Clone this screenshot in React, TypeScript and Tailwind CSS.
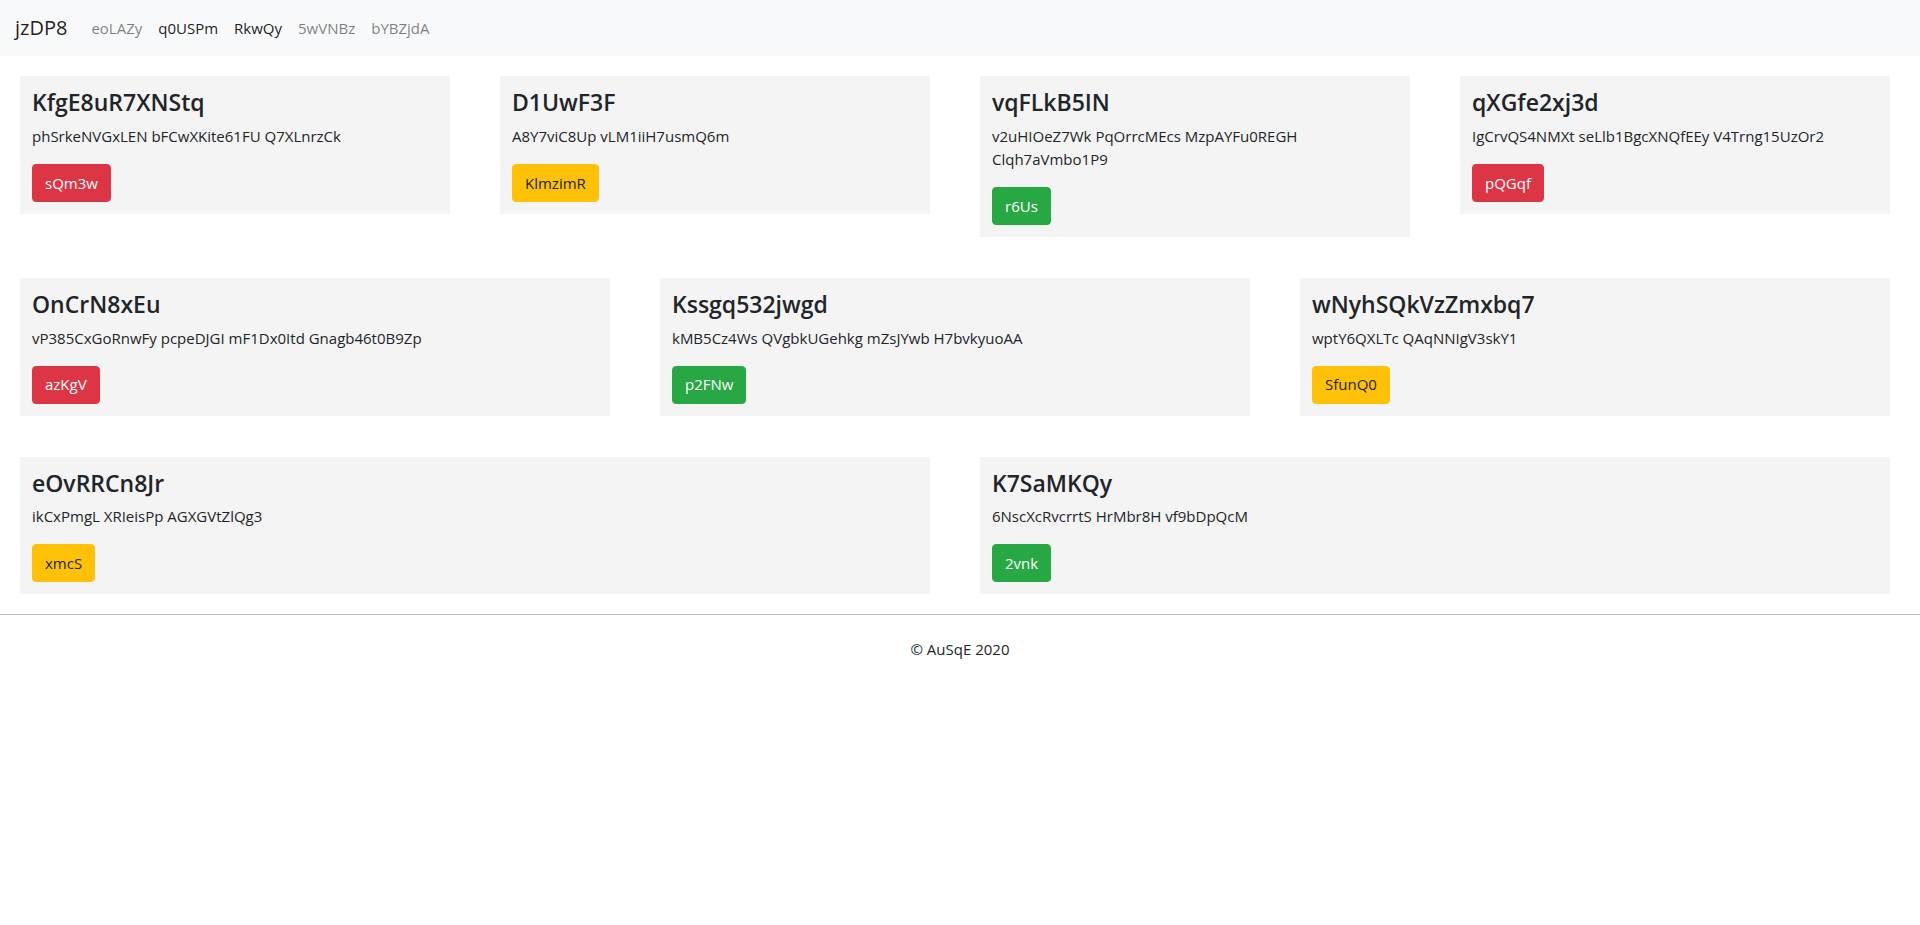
import React from 'react';

type Variant = 'danger' | 'warning' | 'success';

interface Card {
  title: string;
  text: React.ReactNode;
  button: string;
  variant: Variant;
}

const btnClass: Record<Variant, string> = {
  danger: 'bg-[#dc3545] border-[#dc3545] text-white',
  warning: 'bg-[#ffc107] border-[#ffc107] text-[#212529]',
  success: 'bg-[#28a745] border-[#28a745] text-white',
};

const rows: { cols: string; cards: Card[] }[] = [
  {
    cols: 'grid-cols-4',
    cards: [
      { title: 'KfgE8uR7XNStq', text: 'phSrkeNVGxLEN bFCwXKite61FU Q7XLnrzCk', button: 'sQm3w', variant: 'danger' },
      { title: 'D1UwF3F', text: 'A8Y7viC8Up vLM1iiH7usmQ6m', button: 'KlmzimR', variant: 'warning' },
      { title: 'vqFLkB5IN', text: 'v2uHIOeZ7Wk PqOrrcMEcs MzpAYFu0REGH Clqh7aVmbo1P9', button: 'r6Us', variant: 'success' },
      { title: 'qXGfe2xj3d', text: 'IgCrvQS4NMXt seLlb1BgcXNQfEEy V4Trng15UzOr2', button: 'pQGqf', variant: 'danger' },
    ],
  },
  {
    cols: 'grid-cols-3',
    cards: [
      { title: 'OnCrN8xEu', text: 'vP385CxGoRnwFy pcpeDJGI mF1Dx0Itd Gnagb46t0B9Zp', button: 'azKgV', variant: 'danger' },
      { title: 'Kssgq532jwgd', text: 'kMB5Cz4Ws QVgbkUGehkg mZsJYwb H7bvkyuoAA', button: 'p2FNw', variant: 'success' },
      { title: 'wNyhSQkVzZmxbq7', text: 'wptY6QXLTc QAqNNIgV3skY1', button: 'SfunQ0', variant: 'warning' },
    ],
  },
  {
    cols: 'grid-cols-2',
    cards: [
      { title: 'eOvRRCn8Jr', text: 'ikCxPmgL XRIeisPp AGXGVtZlQg3', button: 'xmcS', variant: 'warning' },
      { title: 'K7SaMKQy', text: '6NscXcRvcrrtS HrMbr8H vf9bDpQcM', button: '2vnk', variant: 'success' },
    ],
  },
];

const navLinks = [
  { label: 'eoLAZy', active: false },
  { label: 'q0USPm', active: true },
  { label: 'RkwQy', active: true },
  { label: '5wVNBz', active: false },
  { label: 'bYBZjdA', active: false },
];

const CardBox: React.FC<{ card: Card }> = ({ card }) => (
  <div className="bg-[#f4f4f4] p-3">
    <h3 className="text-[23px] leading-[28.8px] font-semibold mb-2 text-[#212529]">{card.title}</h3>
    <p className="text-[15px] leading-[23px] mb-4 text-[#212529]">{card.text}</p>
    <button
      className={`${btnClass[card.variant]} border rounded-[4px] px-3 h-[38px] text-[15px] leading-[1.5]`}
    >
      {card.button}
    </button>
  </div>
);

export default function App() {
  return (
    <div className="min-h-screen bg-white text-[#212529]" style={{ fontFamily: '"Segoe UI", "Open Sans", sans-serif' }}>
      <nav className="bg-[#f8f9fa] h-[56px] flex items-center px-[15px]">
        <a className="text-[20px] leading-[30px] mr-4 text-black/90">jzDP8</a>
        <div className="flex">
          {navLinks.map((l) => (
            <a key={l.label} className={`px-2 text-[15px] leading-6 ${l.active ? 'text-black/90' : 'text-black/50'}`}>
              {l.label}
            </a>
          ))}
        </div>
      </nav>

      <main className="pl-[20px] pr-[30px] pt-[20px]">
        {rows.map((row, i) => (
          <div key={i} className={`grid ${row.cols} gap-x-[50px] items-start ${i === rows.length - 1 ? 'mb-[20px]' : 'mb-[41px]'}`}>
            {row.cards.map((c) => (
              <CardBox key={c.title} card={c} />
            ))}
          </div>
        ))}
      </main>

      <footer>
        <hr className="border-0 border-t border-[#bdbdbd]" />
        <p className="text-center text-[15px] leading-6 py-[22px] text-[#212529]">© AuSqE 2020</p>
      </footer>
    </div>
  );
}
